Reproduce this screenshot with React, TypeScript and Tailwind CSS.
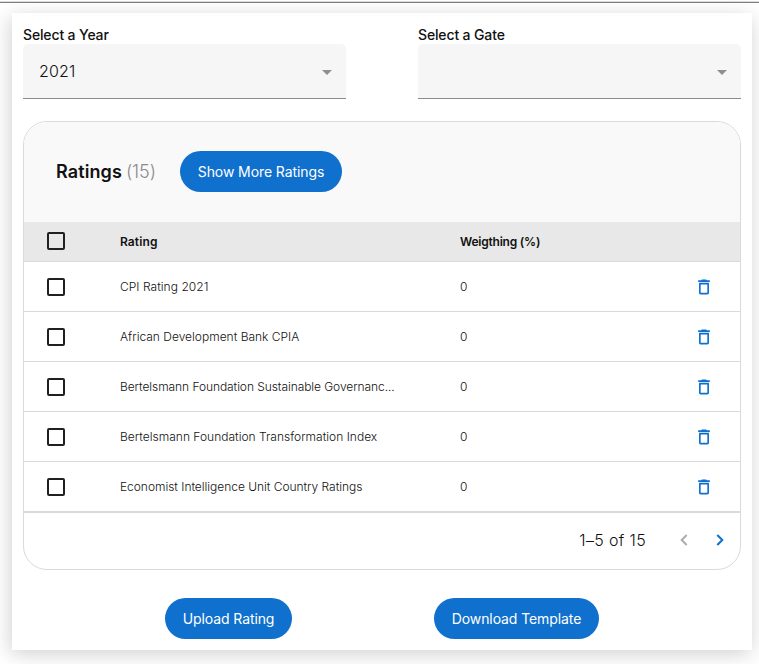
import React from "react";

const ratings = [
  { name: "CPI Rating 2021", spacing: "tracking-[0.04px]" },
  { name: "African Development Bank CPIA", spacing: "tracking-[0px]" },
  { name: "Bertelsmann Foundation Sustainable Governanc...", spacing: "tracking-[-0.07px]" },
  { name: "Bertelsmann Foundation Transformation Index", spacing: "tracking-[0.01px]" },
  { name: "Economist Intelligence Unit Country Ratings", spacing: "tracking-[-0.03px]" },
];

function Select({ label, value }: { label: string; value?: string }) {
  return (
    <div className="w-[323px]">
      <div className="h-[18px] text-[14px] leading-[18px] font-medium tracking-[-0.14px]">
        <span>{label}</span>
      </div>
      <div className="flex h-[55px] items-center justify-between rounded-t-[5px] border-b border-[#8c8c8c] bg-[#f6f6f6] pr-[14px] pl-4 text-[16px] font-light tracking-[0.15px]">
        <span>{value}</span>
        <svg className="mt-0.5" width="10" height="5" viewBox="0 0 10 5" fill="#8f8f8f">
          <path d="M0 0h10L5 5z" />
        </svg>
      </div>
    </div>
  );
}

function Checkbox() {
  return <span className="block size-[18px] rounded-[2px] border-2 border-[#202020]" />;
}

function Trash() {
  return (
    <svg width="20" height="20" viewBox="0 0 24 24" fill="#0f70cd">
      <path d="M6 19c0 1.100.9 2 2 2h8c1.100 0 2-.9 2-2V7H6v12zM8 9h8v10H8V9zm7.500-5l-1-1h-5l-1 1H5v2h14V4z" />
    </svg>
  );
}

function Button({ className, children }: { className: string; children: React.ReactNode }) {
  return (
    <button className={`flex h-[41px] items-center justify-center rounded-full bg-[#0f70cd] text-[14px] tracking-[-0.09px] whitespace-nowrap text-white ${className}`}>
      <span>{children}</span>
    </button>
  );
}

export default function App() {
  return (
    <div className="h-[664px] w-[759px] overflow-hidden bg-white font-['Inter',sans-serif] text-[#111]">
      <div className="h-[3px] border-t border-b border-t-white border-b-[#808080] bg-[#dcdcdc]" />
      <main className="mt-[10px] ml-3 h-[637px] w-[740px] bg-white px-[11px] pt-[13px] shadow-[0_4px_20px_rgba(0,0,0,0.16),-8px_4px_16px_rgba(0,0,0,0.03)]">
        <div className="flex justify-between">
          <Select label="Select a Year" value="2021" />
          <Select label="Select a Gate" />
        </div>

        <section className="mt-[22px] h-[449px] overflow-hidden rounded-[24px] border border-[#dadada]">
          <div className="flex h-[100px] items-center bg-[#f9f9f9] pb-[2px] pl-8">
            <h2 className="flex w-[124px] gap-1 text-[18px] font-semibold whitespace-nowrap">
              <span className="tracking-[0.1px]">Ratings</span>
              <span className="font-light tracking-[-0.1px] text-[#8a8a8a]">(15)</span>
            </h2>
            <Button className="w-[162px]">Show More Ratings</Button>
          </div>

          <div className="grid h-10 grid-cols-[73px_340px_1fr] items-center border-b border-[#dadada] bg-[#e8e8e8] pb-px pl-[23px] text-[12px] font-semibold">
            <Checkbox />
            <span className="pt-px tracking-[0.1px]">Rating</span>
            <span className="pt-px tracking-[-0.22px]">Weigthing (%)</span>
          </div>
          {ratings.map((r) => (
            <div key={r.name} className="grid h-[50px] grid-cols-[73px_340px_1fr_20px] items-center border-b border-[#dadada] pr-[26px] pl-[23px] text-[12px] font-light">
              <Checkbox />
              <span className={r.spacing}>{r.name}</span>
              <span>0</span>
              <Trash />
            </div>
          ))}
          <div className="flex h-[57px] items-center justify-end border-t border-[#dadada] pr-[15px] pb-[2px] text-[16px] font-light">
            <span className="tracking-[0.35px]">1–5 of 15</span>
            <svg className="ml-[33px]" width="10" height="12" viewBox="0 0 10 12" fill="none" stroke="#adadad" strokeWidth="2">
              <path d="M7.700 1L2.700 6l5 5" />
            </svg>
            <svg className="ml-[26px]" width="10" height="12" viewBox="0 0 10 12" fill="none" stroke="#0f70cd" strokeWidth="2">
              <path d="M2.300 1l5 5-5 5" />
            </svg>
          </div>
        </section>

        <div className="mt-7 flex pl-[142px]">
          <Button className="w-[127px]">Upload Rating</Button>
          <Button className="ml-[142px] w-[165px]">Download Template</Button>
        </div>
      </main>
    </div>
  );
}
